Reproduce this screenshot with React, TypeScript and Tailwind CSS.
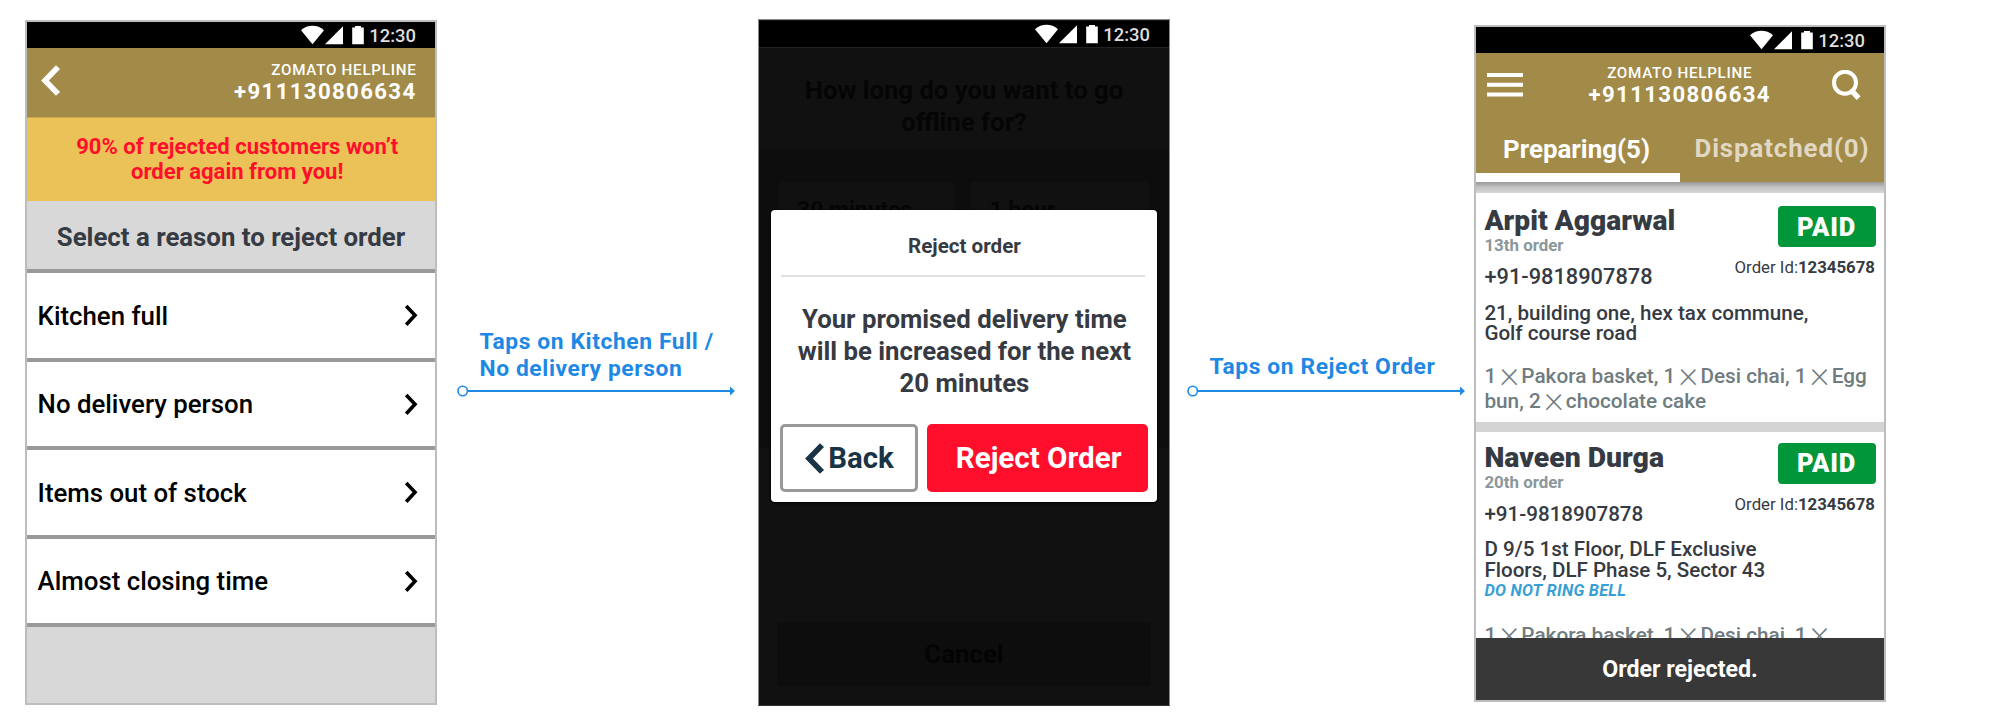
import type { ReactNode } from "react";

function StatusBar({ className = "pr-[19px]" }: { className?: string }) {
  return (
    <div className={`flex h-[26px] shrink-0 items-center justify-end bg-black ${className}`}>
      <svg width="63" height="20" viewBox="0 0 63 20" className="mr-[5px] fill-white">
        <path d="M0 5.2C6.5-.6 16.5-.6 23 5.2L11.5 19.2z" />
        <path d="M42 1.2V19.2H24z" />
        <path d="M54 1h6v1.4h2.8v16.8H51.2V2.4H54z" />
      </svg>
      <span className="pt-[1px] text-[18.4px] leading-[24px] font-medium text-[#dedede]">12:30</span>
    </div>
  );
}

function Helpline({ className }: { className: string }) {
  return (
    <div className={`flex flex-col text-white ${className}`}>
      <span className="text-[15.2px] leading-[20px] font-medium tracking-[0.72px]">ZOMATO HELPLINE</span>
      <span className="text-[22.2px] leading-[23px] font-bold tracking-[1.35px]">+911130806634</span>
    </div>
  );
}

function ChevronLeft({ className }: { className: string }) {
  return (
    <svg width="20" height="31" viewBox="0 0 20 31" fill="none" stroke="currentColor" className={className}>
      <path d="M17 2.1L4 15.5L17 28.9" strokeWidth="5.6" />
    </svg>
  );
}

const reasons = ["Kitchen full", "No delivery person", "Items out of stock", "Almost closing time"];

function RejectReasons() {
  return (
    <section className="mt-[20px] flex h-[685px] w-[412px] shrink-0 flex-col border-2 border-[#bdbdbd] bg-[#d8d8d8]">
      <StatusBar />
      <header className="flex h-[69px] items-start justify-between bg-[#a28a48] pr-[18.5px] pl-[13.5px]">
        <ChevronLeft className="mt-[17px] text-white" />
        <Helpline className="mt-[12px] items-end" />
      </header>
      <div className="flex h-[84px] items-center justify-center border-t border-[#c9a94f] bg-[#eac257] pb-[2px] pl-[12.5px] text-center text-[22.05px] leading-[25px] font-bold text-[#ff0f2b]">
        <p>
          90% of rejected customers won’t
          <br />
          order again from you!
        </p>
      </div>
      <h2 className="flex h-[68px] items-center justify-center pt-[4px] text-[25.8px] font-bold text-[#363a42]">
        Select a reason to reject order
      </h2>
      <ul className="border-t-4 border-[#999]">
        {reasons.map((r) => (
          <li key={r} className="flex h-[88.6px] items-center justify-between border-b-4 border-[#999] bg-white pr-[17px] pl-[10.6px]">
            <span className="pt-[0.6px] text-[25.8px] leading-[30px] font-medium text-black">{r}</span>
            <svg width="14" height="22" viewBox="0 0 14 22" fill="none" stroke="black" strokeWidth="3.6">
              <path d="M2.2 1.9L11 11.3L2.2 20.7" />
            </svg>
          </li>
        ))}
      </ul>
    </section>
  );
}

function Connector({ className, lead, length, children }: { className: string; lead: string; length: number; children: ReactNode }) {
  return (
    <div className={`shrink-0 ${className}`}>
      <p className={`text-[22.8px] leading-[27px] font-bold tracking-[0.6px] whitespace-nowrap text-[#1e88e5] ${lead}`}>{children}</p>
      <svg width={length} height="12" viewBox={`0 0 ${length} 12`} fill="none" stroke="#1e88e5">
        <circle cx="5.7" cy="6" r="4.7" strokeWidth="1.6" />
        <path d={`M10.5 6H${length - 4}`} strokeWidth="1.8" />
        <path d={`M${length - 5} 1.4L${length} 6L${length - 5} 10.6z`} fill="#1e88e5" stroke="none" />
      </svg>
    </div>
  );
}

function ConfirmReject() {
  return (
    <section className="relative mt-[19px] flex h-[687px] w-[412px] shrink-0 flex-col border border-[#8a8a8a] border-b-[#333] bg-[#111]">
      <div className="border-b border-[#222] pt-[1px]">
        <StatusBar className="pr-[19px]" />
      </div>
      <h2 className="h-[101px] bg-[#111] pt-[26px] text-center text-[25.7px] leading-[32px] font-bold text-[#050505]">
        How long do you want to go
        <br />
        offline for?
      </h2>
      <div className="flex h-[299px] gap-[15px] bg-[#0d0d0d] px-[20px] pt-[33px]">
        <div className="h-[80px] flex-1 rounded bg-[#111] px-[18px] pt-[13px] text-[22.9px] leading-[30px] font-bold text-[#050505]">30 minutes</div>
        <div className="h-[80px] flex-1 rounded bg-[#111] px-[20px] pt-[13px] text-[22.9px] leading-[30px] font-bold text-[#050505]">1 hour</div>
      </div>
      <div className="mx-[18px] mt-[174px] flex h-[64px] items-center justify-center rounded bg-[#0d0d0d] text-[25.8px] font-bold text-[#040404]">Cancel</div>

      <div className="absolute top-[190px] left-[12.4px] flex h-[292px] w-[386px] flex-col rounded bg-white px-[9px] shadow-[0_1px_3px_#000]">
        <h3 className="mr-[3px] ml-[1px] flex h-[67px] items-center justify-center border-b-2 border-[#dfdfdf] pt-[7px] pl-[2px] text-[20.6px] font-bold text-[#363a42]">Reject order</h3>
        <p className="mt-[25.5px] text-center text-[25.75px] leading-[32.1px] font-bold text-[#363a42]">
          Your promised delivery time
          <br />
          will be increased for the next
          <br />
          20 minutes
        </p>
        <div className="mt-[25px] flex h-[68px] gap-[9px]">
          <button className="flex w-[137.5px] items-center justify-center rounded-[5px] border-[3px] border-[#999] pt-[1px] text-[29.4px] font-bold text-[#1a3345]">
            <ChevronLeft className="mr-[3.5px]" />
            Back
          </button>
          <button className="flex-1 rounded-[5px] bg-[#ff0f2b] pt-[1px] pl-[2px] text-[29.6px] font-bold text-white">Reject Order</button>
        </div>
      </div>
    </section>
  );
}

function Times() {
  return <span className="inline-flex w-[14.8px] justify-center align-[-3px] pl-[1px] text-[38px] leading-[0px] font-extralight">×</span>;
}

function Paid() {
  return (
    <div className="flex flex-col items-end">
      <span className="flex h-[41px] w-[98px] items-center justify-center rounded-[4px] bg-[#009639] pt-[1px] text-[25.5px] font-black tracking-[0.8px] text-white">PAID</span>
      <span className="mt-[10px] mr-[0.5px] text-[16.8px] leading-[20px] text-[#363a42]">
        Order Id:<b className="text-[16.8px] font-bold">12345678</b>
      </span>
    </div>
  );
}

function Orders() {
  return (
    <section className="mt-[25px] flex h-[677px] w-[412px] shrink-0 flex-col border-2 border-[#bdbdbd] bg-white text-[#363a42]">
      <StatusBar />
      <header className="h-[129px] bg-[#a28a48] text-white">
        <div className="flex h-[64px] items-start justify-between pr-[23px] pl-[11px]">
          <svg width="36" height="24" viewBox="0 0 36 24" className="mt-[20px] fill-white">
            <path d="M0 0h36v4H0zM0 9.7h36v4H0zM0 19.4h36v4H0z" />
          </svg>
          <Helpline className="mt-[9.5px] items-center pl-[4.5px]" />
          <svg width="29" height="31" viewBox="0 0 29 31" fill="none" stroke="white" className="mt-[17px]">
            <circle cx="13" cy="12.7" r="11" strokeWidth="4" />
            <path d="M18.5 19.5L26.6 28.2" strokeWidth="5.4" />
          </svg>
        </div>
        <div className="flex h-[65px]">
          <span className="flex h-full w-[204px] items-center justify-center border-b-[9px] border-white pt-[8px] pr-[3px] text-[25.9px] font-bold">Preparing(5)</span>
          <span className="flex h-[56px] flex-1 items-center justify-center pt-[6px] text-[25.9px] font-bold tracking-[0.88px] text-[#e0d8c3]">Dispatched(0)</span>
        </div>
      </header>
      <div className="h-[11px] shrink-0 bg-linear-to-b from-[#999] via-[#c4c4c4] to-[#d6d6d6]" />
      <article className="relative flex h-[229px] shrink-0 flex-col pl-[8.4px]">
        <h3 className="mt-[11px] text-[28.2px] leading-[34px] font-black">Arpit Aggarwal</h3>
        <span className="-mt-px text-[16.9px] leading-[17px] font-bold text-[#8b979b]">13th order</span>
        <span className="mt-[9px] text-[21.8px] leading-[28px] font-medium">+91-9818907878</span>
        <p className="mt-[11.5px] text-[20.6px] leading-[20.5px] font-medium">
          21, building one, hex tax commune,
          <br />
          Golf course road
        </p>
        <p className="mt-[20px] text-[20.75px] leading-[25px] font-medium whitespace-nowrap text-[#6f7c80]">
          1 <Times /> Pakora basket, 1 <Times /> Desi chai, 1 <Times /> Egg
          <br />
          bun, 2 <Times /> chocolate cake
        </p>
        <div className="absolute top-[13px] right-[8.5px]">
          <Paid />
        </div>
      </article>
      <div className="h-[10px] shrink-0 bg-[#d4d4d4]" />
      <article className="relative flex min-h-0 flex-1 flex-col overflow-hidden pl-[8.4px]">
        <h3 className="mt-[8.5px] text-[28.4px] leading-[34px] font-black">Naveen Durga</h3>
        <span className="-mt-px text-[16.9px] leading-[17px] font-bold text-[#8b979b]">20th order</span>
        <span className="mt-[9.5px] text-[20.6px] leading-[28px] font-medium">+91-9818907878</span>
        <p className="mt-[11px] text-[20.6px] leading-[21px] font-medium">
          D 9/5 1st Floor, DLF Exclusive
          <br />
          Floors, DLF Phase 5, Sector 43
        </p>
        <span className="text-[16.4px] leading-[20px] font-bold tracking-[0.25px] text-[#379fd3] italic">DO NOT RING BELL</span>
        <p className="mt-[21.5px] text-[20.75px] leading-[25px] font-medium whitespace-nowrap text-[#6f7c80]">
          1 <Times /> Pakora basket, 1 <Times /> Desi chai, 1 <Times />
        </p>
        <div className="absolute top-[10.5px] right-[8.5px]">
          <Paid />
        </div>
      </article>
      <footer className="flex h-[62px] shrink-0 items-center justify-center bg-[#383838] text-[23.2px] font-bold text-white">Order rejected.</footer>
    </section>
  );
}

export default function App() {
  return (
    <main className="flex h-[720px] w-[2000px] items-start overflow-hidden bg-white pl-[25px] font-[Roboto,sans-serif]">
      <RejectReasons />
      <Connector className="w-[321px] pt-[327.6px] pl-[20px]" lead="pb-[3px] pl-[22.5px]" length={278}>
        Taps on Kitchen Full /
        <br />
        No delivery person
      </Connector>
      <ConfirmReject />
      <Connector className="w-[304px] pt-[352.6px] pl-[17px]" lead="pb-[5px] pl-[22.5px]" length={278}>
        Taps on Reject Order
      </Connector>
      <Orders />
    </main>
  );
}
